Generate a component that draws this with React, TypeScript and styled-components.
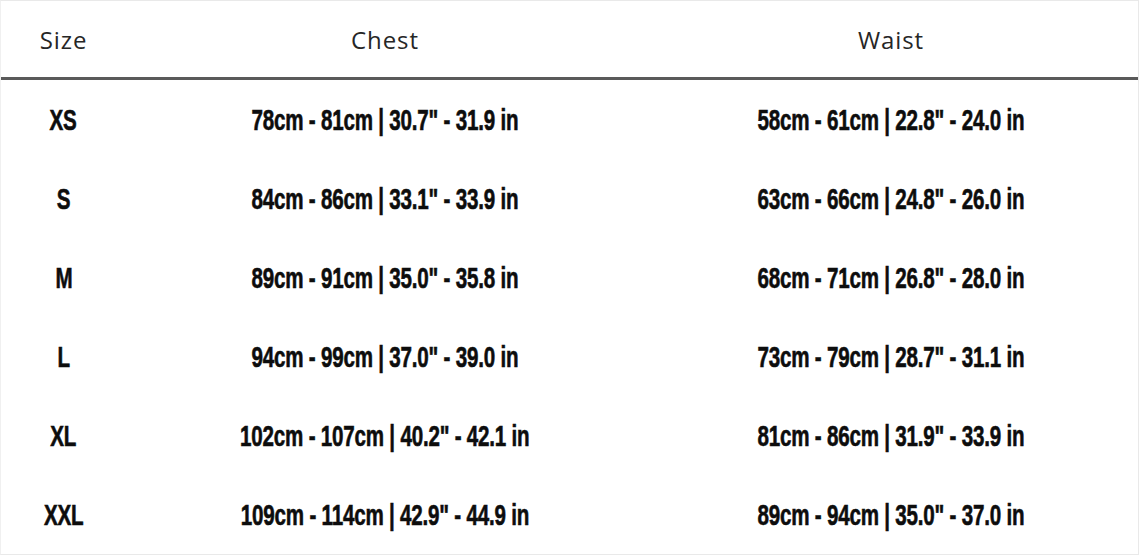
import React from "react";
import styled, { createGlobalStyle } from "styled-components";

const Global = createGlobalStyle`
  html, body { margin: 0; padding: 0; background: #fff; }
  body { font-family: "Open Sans", "Liberation Sans", sans-serif; }
`;

const Frame = styled.div`
  box-sizing: border-box;
  width: 1139px;
  height: 555px;
  border: 1px solid #e9e9e9;
  border-left-color: #f0f0f0;
  background: #fff;
  display: grid;
  grid-template-columns: 125px 518px 1fr;
  grid-template-rows: 76px 3px repeat(6, 79px);
`;

const HeadCell = styled.div`
  display: flex;
  align-items: center;
  justify-content: center;
  font-family: "Open Sans", "Liberation Sans", sans-serif;
  font-size: 24px;
  font-weight: 400;
  letter-spacing: 0.9px;
  color: #262626;
  padding-top: 1px;
`;

const Rule = styled.div`
  grid-column: 1 / -1;
  background: #5a5a5a;
`;

const Cell = styled.div`
  display: flex;
  align-items: center;
  justify-content: center;
  padding-top: 2px;
`;

const Condensed = styled.span`
  display: inline-block;
  font-family: "Liberation Sans", Arial, sans-serif;
  font-weight: 700;
  font-size: 29px;
  color: #0d0d0d;
  white-space: nowrap;
  transform: scaleX(0.71);
  letter-spacing: -0.3px;
  -webkit-text-stroke: 0.6px #0d0d0d;
`;

const rows = [
  ["XS", `78cm - 81cm | 30.7" - 31.9 in`, `58cm - 61cm | 22.8" - 24.0 in`],
  ["S", `84cm - 86cm | 33.1" - 33.9 in`, `63cm - 66cm | 24.8" - 26.0 in`],
  ["M", `89cm - 91cm | 35.0" - 35.8 in`, `68cm - 71cm | 26.8" - 28.0 in`],
  ["L", `94cm - 99cm | 37.0" - 39.0 in`, `73cm - 79cm | 28.7" - 31.1 in`],
  ["XL", `102cm - 107cm | 40.2" - 42.1 in`, `81cm - 86cm | 31.9" - 33.9 in`],
  ["XXL", `109cm - 114cm | 42.9" - 44.9 in`, `89cm - 94cm | 35.0" - 37.0 in`],
];

export default function App() {
  return (
    <>
      <Global />
      <Frame>
        <HeadCell>Size</HeadCell>
        <HeadCell>Chest</HeadCell>
        <HeadCell>Waist</HeadCell>
        <Rule />
        {rows.map((r) => (
          <React.Fragment key={r[0]}>
            {r.map((v, i) => (
              <Cell key={i}>
                <Condensed>{v}</Condensed>
              </Cell>
            ))}
          </React.Fragment>
        ))}
      </Frame>
    </>
  );
}
